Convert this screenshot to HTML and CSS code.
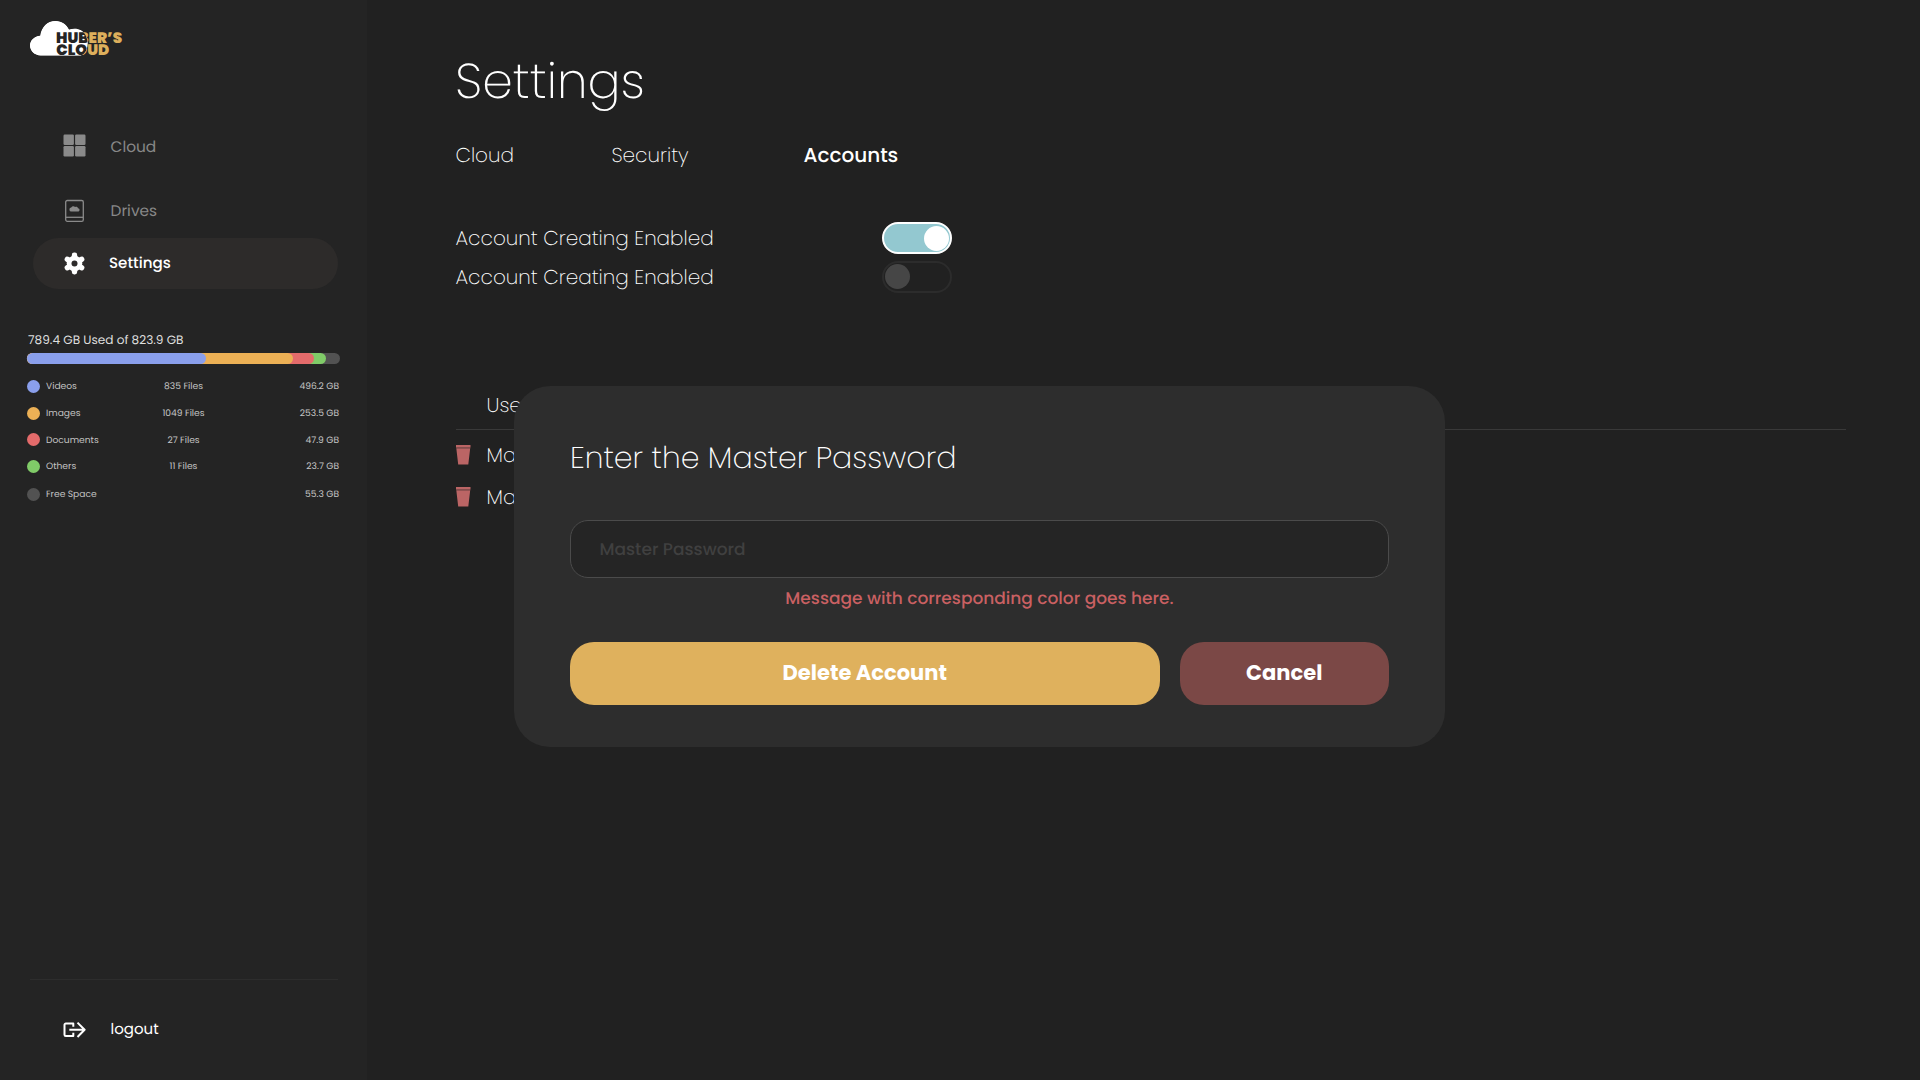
FILE: index.html
```html
<!DOCTYPE html>
<html lang="en">
<head>
<meta charset="utf-8">
<title>Huber's Cloud – Settings</title>
<link rel="stylesheet" href="styles.css">
</head>
<body>
<div class="app">
  <aside class="sidebar">
    <svg class="logo" width="100" height="40" viewBox="0 0 100 40" role="img" aria-label="Huber's Cloud">
      <defs>
        <path id="cloud" d="M10.5 37.5C4.700 37.500 0 33 0 27.600C0 22.300 4.300 18.200 10.300 17.700C11.500 9 17.500 3 25.500 3C32 3 36.500 6.500 39 11.800C45 9.200 52.500 11 55.500 17C58.500 23 58.500 30 54.500 35C53 37 51 37.500 49 37.500Z"/>
        <clipPath id="inside"><use href="#cloud"/></clipPath>
      </defs>
      <use href="#cloud" fill="#fff"/>
      <g class="logo-text logo-gold">
        <text x="26" y="24.500">HUBER’S</text>
        <text x="26.300" y="36.500">CLOUD</text>
      </g>
      <g clip-path="url(#inside)" aria-hidden="true">
        <use href="#cloud" fill="#fff"/>
        <g class="logo-text logo-dark">
          <text x="26" y="24.500">HUBER’S</text>
          <text x="26.300" y="36.500">CLOUD</text>
        </g>
      </g>
    </svg>

    <nav class="nav">
      <a class="nav-item">
        <svg class="nav-icon" viewBox="0 0 24 24" fill="#8a8a8a">
          <rect x="1.500" y=".5" width="10.400" height="10.400" rx="1.200"/><rect x="13.100" y=".5" width="10.400" height="10.400" rx="1.200"/>
          <rect x="1.500" y="12.100" width="10.400" height="10.400" rx="1.200"/><rect x="13.100" y="12.100" width="10.400" height="10.400" rx="1.200"/>
        </svg>
        <span class="nav-label">Cloud</span>
      </a>
      <a class="nav-item">
        <svg class="nav-icon" viewBox="0 0 24 24" fill="none" stroke="#8a8a8a" stroke-width="1.300">
          <rect x="3.700" y="1.500" width="17.600" height="20.800" rx="1.600"/>
          <path d="M3.700 18.300H21.300"/>
          <path d="M9.500 12.600a2 2 0 0 1-.2-4C9.700 7 12 6.600 13.100 8c1.500-.6 2.800.2 2.900 1.300 2.200.2 2 3.300 0 3.300Z" fill="#8a8a8a" stroke="none"/>
        </svg>
        <span class="nav-label">Drives</span>
      </a>
      <a class="nav-item active">
        <svg class="nav-icon" viewBox="-.5 .5 24 24">
          <g fill="#fff">
            <circle cx="12" cy="12" r="7.800"/>
            <rect x="9.300" y="1" width="5.400" height="22" rx="2.400"/>
            <rect x="9.300" y="1" width="5.400" height="22" rx="2.400" transform="rotate(60 12 12)"/>
            <rect x="9.300" y="1" width="5.400" height="22" rx="2.400" transform="rotate(120 12 12)"/>
          </g>
          <circle cx="12" cy="12" r="3" fill="#2d2b2a"/>
        </svg>
        <span class="nav-label">Settings</span>
      </a>
    </nav>

    <section class="storage">
      <h2 class="storage-title">789.4 GB Used of 823.9 GB</h2>
      <div class="bar">
        <span class="seg free" style="width:313px"></span>
        <span class="seg others" style="width:298.500px"></span>
        <span class="seg documents" style="width:287px"></span>
        <span class="seg images" style="width:266px"></span>
        <span class="seg videos" style="width:179px"></span>
      </div>
      <ul class="legend">
        <li><i class="dot videos"></i><span class="kind">Videos</span><span class="count">835 Files</span><span class="size">496.2 GB</span></li>
        <li><i class="dot images"></i><span class="kind">Images</span><span class="count">1049 Files</span><span class="size">253.5 GB</span></li>
        <li><i class="dot documents"></i><span class="kind">Documents</span><span class="count">27 Files</span><span class="size">47.9 GB</span></li>
        <li><i class="dot others"></i><span class="kind">Others</span><span class="count">11 Files</span><span class="size">23.7 GB</span></li>
        <li class="last"><i class="dot free"></i><span class="kind">Free Space</span><span class="count"></span><span class="size">55.3 GB</span></li>
      </ul>
    </section>

    <footer class="side-footer">
      <a class="nav-item logout">
        <svg class="nav-icon" viewBox="-.3 0 24 24" fill="none" stroke="#fff" stroke-width="2" stroke-linejoin="round">
          <path d="M11 8.700V5.500H3.500a1.300 1.300 0 0 0-1.300 1.300V16.700a1.300 1.300 0 0 0 1.300 1.300H11V14.800M7 11.800H22M15.200 4.600L22.300 11.800L15.200 19"/>
        </svg>
        <span class="nav-label">logout</span>
      </a>
    </footer>
  </aside>

  <main class="main">
    <h1 class="title">Settings</h1>
    <div class="tabs">
      <a class="tab first">Cloud</a>
      <a class="tab">Security</a>
      <a class="tab selected">Accounts</a>
    </div>
    <div class="options">
      <div class="option"><span>Account Creating Enabled</span><span class="toggle on"></span></div>
      <div class="option"><span>Account Creating Enabled</span><span class="toggle"></span></div>
    </div>
    <div class="table">
      <div class="row head"><span></span><span>User</span></div>
      <div class="row">
        <svg width="15" height="20" viewBox="0 0 15 20" fill="#bb6565"><path d="M0 0H14.500V2H0ZM.3 3.200H14.200L12.300 19.500H2.200Z"/><path d="M0 2H14.500V3.200H0Z" fill="#844d4d"/></svg>
        <span>Ma</span>
      </div>
      <div class="row">
        <svg width="15" height="20" viewBox="0 0 15 20" fill="#bb6565"><path d="M0 0H14.500V2H0ZM.3 3.200H14.200L12.300 19.500H2.200Z"/><path d="M0 2H14.500V3.200H0Z" fill="#844d4d"/></svg>
        <span>Ma</span>
      </div>
    </div>
  </main>

  <div class="modal" role="dialog">
    <h2 class="modal-title">Enter the Master Password</h2>
    <div class="input">Master Password</div>
    <p class="message">Message with corresponding color goes here.</p>
    <div class="actions">
      <button class="btn primary">Delete Account</button>
      <button class="btn danger">Cancel</button>
    </div>
  </div>
</div>
</body>
</html>
```
FILE: styles.css
```css
* { box-sizing: border-box; margin: 0; padding: 0; }

body {
  font-family: Poppins, Inter, sans-serif;
  background: #212121;
  color: #fff;
  text-rendering: geometricPrecision;
}

.app {
  position: relative;
  display: flex;
  width: 1920px;
  height: 1080px;
  overflow: hidden;
}

/* Sidebar */
.sidebar {
  display: flex;
  flex-direction: column;
  width: 367px;
  padding: 18px 27px 0;
  background: #242424;
}

.logo { margin-left: 3px; overflow: visible; }
.logo-text { font-size: 15.1px; font-weight: 900; }
.logo-gold { fill: #ddaf5c; }
.logo-dark { fill: #242424; }

.nav {
  display: flex;
  flex-direction: column;
  margin: 62px 0 0 6px;
}

.nav-item {
  display: flex;
  align-items: center;
  gap: 24.5px;
  width: 305px;
  height: 51px;
  padding-left: 29px;
  border-radius: 26px;
  color: #888;
  font-size: 15.4px;
  line-height: 24px;
}
.nav-item + .nav-item { margin-top: 14px; }
.nav-item.active {
  margin-top: 2px;
  gap: 23px;
  background: #2d2b2a;
  color: #fff;
  font-size: 15.1px;
  font-weight: 500;
}
.nav-icon { width: 24px; height: 24px; }
.nav-label { padding-top: 2px; }
.nav .nav-item:first-child .nav-label { padding-top: 4px; }
.nav-item.active .nav-label { padding-top: 0; }

.storage { margin-top: 41px; }
.storage-title {
  height: 20px;
  padding-left: 1px;
  color: #dedede;
  font-size: 12.1px;
  font-weight: 400;
  line-height: 22px;
}

.bar {
  display: grid;
  width: 313px;
  height: 11px;
  margin-top: 3px;
}
.seg {
  grid-area: 1 / 1;
  height: 11px;
  border-radius: 6px;
}
.videos { background: #8a9fec; }
.images { background: #ecb055; }
.documents { background: #e46b6b; }
.others { background: #80cb68; }
.free { background: #525252; }

.legend {
  margin-top: 9px;
  list-style: none;
}
.legend li {
  display: grid;
  grid-template-columns: 13px 87px 113px 1fr;
  align-items: center;
  width: 312px;
  height: 26.7px;
  color: #c4c4c4;
  font-size: 9.15px;
}
.legend span { padding-top: 1.6px; }
.legend .last { margin-top: 1px; }
.dot { width: 13px; height: 13px; border-radius: 50%; }
.kind { padding-left: 6px; }
.count { text-align: center; }
.size { text-align: right; }

.side-footer {
  width: 308px;
  margin: auto 0 25px 3px;
  padding-top: 24px;
  border-top: 1px solid #2d2d2d;
}
.logout {
  margin-left: 3px;
  color: #fff;
  font-size: 15px;
}
.side-footer .logout .nav-label { padding-top: 1px; }

/* Content */
.main {
  flex: 1;
  padding: 49px 74px 0 88.5px;
}
.title,
.tab,
.option,
.table,
.modal-title {
  font-family: "Poppins ExtraLight", Poppins, Inter, sans-serif;
  font-weight: 200;
}
.title {
  height: 65px;
  margin-left: -.5px;
  font-size: 49px;
  line-height: 67px;
}
.tabs {
  display: flex;
  height: 30px;
  margin-top: 26px;
  font-size: 20px;
  line-height: 31px;
}
.tab { width: 192px; }
.tab.first { width: 156px; }
.tab.selected {
  font-family: Poppins, Inter, sans-serif;
  font-size: 20px;
  font-weight: 500;
}

.options { margin-top: 49px; }
.option {
  display: flex;
  align-items: center;
  justify-content: space-between;
  width: 496.5px;
  height: 38.5px;
  font-size: 20px;
}
.toggle {
  display: flex;
  width: 70px;
  height: 32px;
  padding: 2px 1px;
  border: 2px solid #2c2c2c;
  border-radius: 16px;
}
.toggle::before {
  content: "";
  width: 25px;
  height: 25px;
  margin-top: -.5px;
  border-radius: 50%;
  background: #464646;
}
.toggle.on {
  justify-content: flex-end;
  border-color: #fff;
  background: #93c8d0;
}
.toggle.on::before { background: #fff; }

.table {
  margin-top: 85px;
  font-size: 20px;
}
.row {
  display: grid;
  grid-template-columns: 31px 1fr;
  align-items: center;
  height: 41.5px;
}
.row.head {
  height: 49px;
  margin-bottom: 4.5px;
  border-bottom: 1px solid #393939;
}

/* Password dialog lies over the page */
.modal {
  position: absolute;
  left: 514px;
  top: 386px;
  width: 931px;
  height: 361px;
  padding: 51px 56px 0;
  border-radius: 36px;
  background: #2d2d2d;
}
.modal-title {
  font-size: 30px;
  line-height: 41px;
}
.input {
  height: 58px;
  margin-top: 42px;
  padding-left: 28.5px;
  border: 1px solid #4b4b4b;
  border-radius: 18px;
  background: #252525;
  color: #404040;
  font-size: 17px;
  font-weight: 500;
  line-height: 57px;
}
.message {
  margin-top: 8.5px;
  color: #c96062;
  font-size: 17px;
  font-weight: 500;
  line-height: 23px;
  text-align: center;
}
.actions {
  display: grid;
  grid-template-columns: 589.5px 209.5px;
  gap: 20px;
  margin-top: 32px;
}
.btn {
  height: 63px;
  padding-bottom: 2px;
  border: 0;
  border-radius: 24px;
  color: #fff;
  font: 700 21px Poppins, Inter, sans-serif;
}
.primary { background: #dfb15d; }
.danger { background: #7b4846; }
```
